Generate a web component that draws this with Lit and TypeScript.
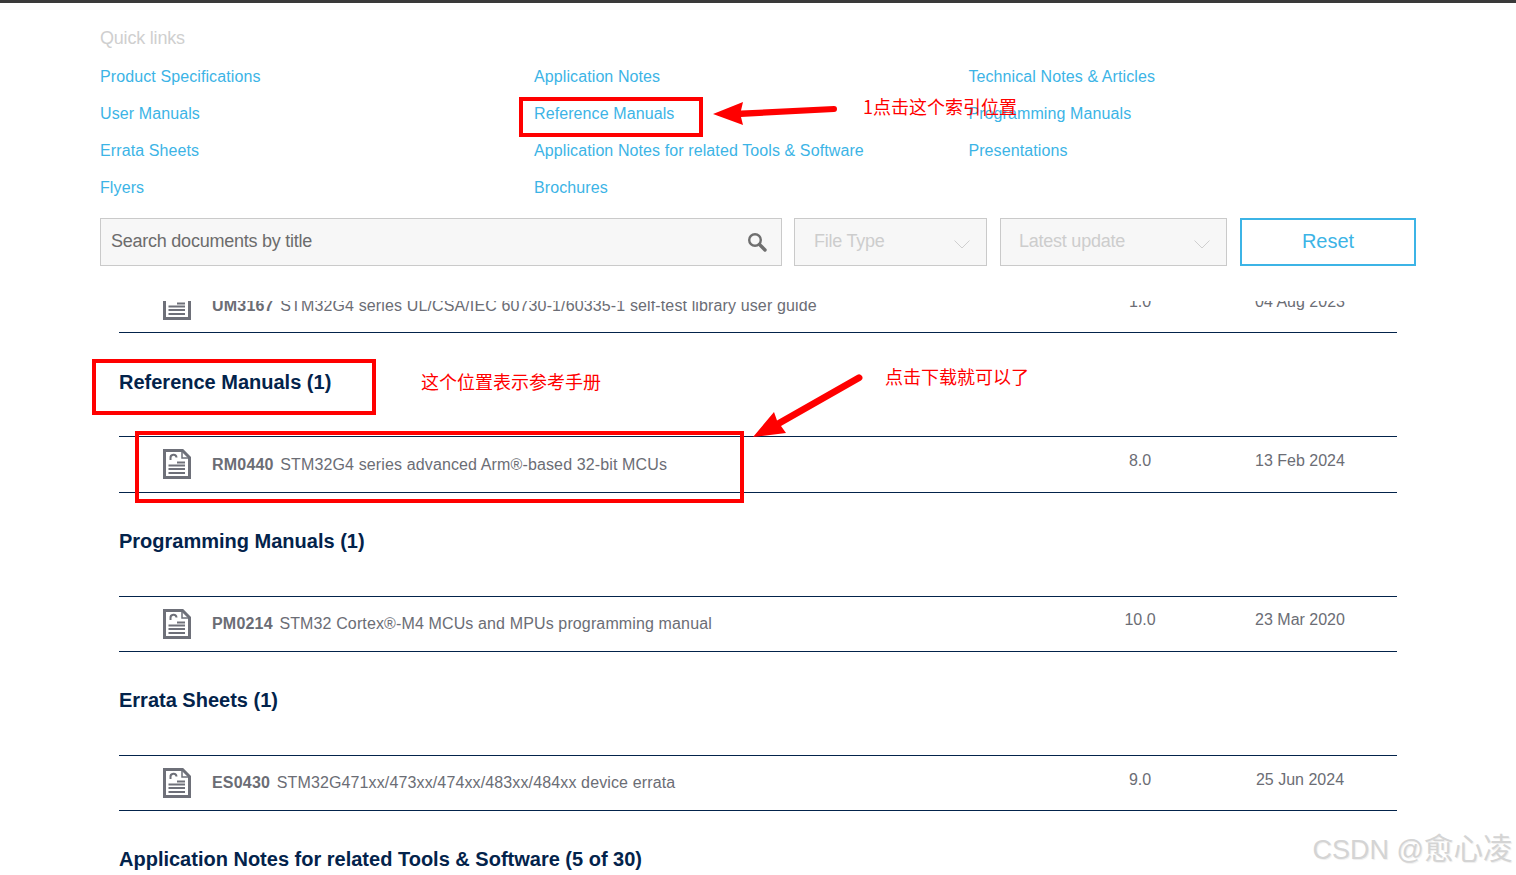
import { LitElement, html, css, svg } from "lit";
import { customElement } from "lit/decorators.js";

const docIcon = svg`<svg class="doc" width="28" height="30" viewBox="0 0 28 30" fill="none" stroke="#6e7079">
  <path d="M1.5 1.5H19.5L26.5 8.5V28.5H1.5Z" stroke-width="3" stroke-linejoin="miter"/>
  <path d="M19 2V9H26" stroke-width="1.5"/>
  <path d="M7.5 11V9A3 3 0 0 1 13.5 8.5" stroke-width="2"/>
  <path d="M14 13.5H22M5.5 16.5H22M5.5 20H22M5.5 24H22" stroke-width="2"/>
</svg>`;

const sections = [
  { title: "Reference Manuals (1)", code: "RM0440", name: "STM32G4 series advanced Arm®-based 32-bit MCUs", ver: "8.0", date: "13 Feb 2024" },
  { title: "Programming Manuals (1)", code: "PM0214", name: "STM32 Cortex®-M4 MCUs and MPUs programming manual", ver: "10.0", date: "23 Mar 2020" },
  { title: "Errata Sheets (1)", code: "ES0430", name: "STM32G471xx/473xx/474xx/483xx/484xx device errata", ver: "9.0", date: "25 Jun 2024" },
];

const links = [
  "Product Specifications", "Application Notes", "Technical Notes & Articles",
  "User Manuals", "Reference Manuals", "Programming Manuals",
  "Errata Sheets", "Application Notes for related Tools & Software", "Presentations",
  "Flyers", "Brochures",
];

const chevron = svg`<svg width="16" height="9" viewBox="0 0 16 9" fill="none" stroke="#cfcfcf" stroke-width="1"><path d="M.5 .5L8 8L15.5 .5"/></svg>`;

@customElement("app-root")
export class AppRoot extends LitElement {
  static styles = css`
    :host {
      display: block;
      position: relative;
      width: 1516px;
      height: 875px;
      overflow: hidden;
      background: #fff;
      font-family: "Liberation Sans", Arial, sans-serif;
    }
    .topbar { height: 3px; background: #3a3a3a; }
    .filters { padding: 0 100px; }
    .quick { height: 47px; padding-top: 24px; box-sizing: border-box; font-size: 18px; line-height: 22px; color: #cfcfcf; letter-spacing: -0.2px; }
    .links { display: grid; grid-template-columns: 434px 434.4px 1fr; grid-auto-rows: 37px; height: 148px; margin-top: 8px; }
    .links a { font-size: 16px; line-height: 37px; color: #3cb4e6; text-decoration: none; letter-spacing: 0.1px; }
    .controls { display: flex; height: 48px; margin-top: 12px; }
    .field { box-sizing: border-box; height: 48px; background: #f7f7f7; border: 1px solid #cacaca; display: flex; align-items: center; justify-content: space-between; font-size: 18px; letter-spacing: -0.24px; }
    .field span { margin-bottom: 2px; }
    .search { width: 682px; padding: 0 14px 0 10px; color: #6c6c6c; }
    .select { color: #cdcdcd; padding: 0 16px 0 19px; }
    .select svg { margin-top: 5px; }
    .s1 { width: 193px; margin-left: 12px; }
    .s2 { width: 227px; margin-left: 13px; padding-left: 18px; }
    .reset { box-sizing: border-box; width: 176px; height: 48px; margin-left: 13px; padding-bottom: 2px; border: 2px solid #3cb4e6; color: #3cb4e6; font-size: 20px; display: flex; align-items: center; justify-content: center; }
    .list { height: 574px; margin-top: 35px; overflow: hidden; padding: 0 119px; }
    .inner { margin-top: -24.1px; }
    .row { box-sizing: border-box; height: 56.5px; border-top: 1px solid transparent; border-bottom: 1px solid #03234b; display: flex; color: #6b6d75; font-size: 16px; }
    .row.top { border-top-color: #03234b; }
    .doc { flex: none; margin: 12px 21px 0 44px; }
    .label { margin-top: 17.6px; line-height: 20px; white-space: nowrap; flex: 1; letter-spacing: 0.13px; }
    .label b { margin-right: 2px; letter-spacing: 0.2px; }
    .ver { width: 100px; margin-top: 13.8px; line-height: 20px; text-align: center; }
    .date { width: 150px; margin: 13.8px 22px 0 35px; line-height: 20px; text-align: center; }
    h2 { margin: 0; box-sizing: border-box; height: 102.8px; padding-top: 36.2px; font-size: 20px; line-height: 24px; font-weight: 700; color: #03234b; white-space: nowrap; }
    .overlay { position: absolute; inset: 0; pointer-events: none; }
    .box { position: absolute; box-sizing: border-box; border: 4px solid #f00; }
    .note { position: absolute; color: #f00; font-family: "Noto Sans CJK SC", sans-serif; font-size: 18px; line-height: 24px; white-space: nowrap; }
    .mark { position: absolute; left: 1312.5px; top: 829px; font-size: 27px; line-height: 40px; color: #d4d4d4; white-space: nowrap; font-family: "Liberation Sans", "Noto Sans CJK SC", sans-serif; text-shadow: 1px 1px 1px #eee; }
    .mark span { font-size: 29.5px; }
    .arrows { position: absolute; left: 0; top: 0; }
  `;

  private rowTpl(r: { code: string; name: string; ver: string; date: string }, top: boolean) {
    return html`<div class="row ${top ? "top" : ""}">
      ${docIcon}
      <div class="label"><b>${r.code}</b> ${r.name}</div>
      <div class="ver">${r.ver}</div>
      <div class="date">${r.date}</div>
    </div>`;
  }

  render() {
    return html`
      <div class="topbar"></div>
      <div class="filters">
        <div class="quick">Quick links</div>
        <div class="links">${links.map((l) => html`<a href="#">${l}</a>`)}</div>
        <div class="controls">
          <div class="field search">
            <span>Search documents by title</span>
            <svg width="20" height="20" viewBox="0 0 20 20" fill="none">
              <circle cx="8" cy="8" r="5.8" stroke="#6f6f6f" stroke-width="2.4"/>
              <path d="M12.5 12.5L18 18" stroke="#6f6f6f" stroke-width="3.4" stroke-linecap="round"/>
            </svg>
          </div>
          <div class="field select s1"><span>File Type</span>${chevron}</div>
          <div class="field select s2"><span>Latest update</span>${chevron}</div>
          <div class="reset">Reset</div>
        </div>
      </div>
      <div class="list">
        <div class="inner">
          ${this.rowTpl({ code: "UM3167", name: "STM32G4 series UL/CSA/IEC 60730-1/60335-1 self-test library user guide", ver: "1.0", date: "04 Aug 2023" }, false)}
          ${sections.map((s) => html`<h2>${s.title}</h2>${this.rowTpl(s, true)}`)}
          <h2>Application Notes for related Tools &amp; Software (5 of 30)</h2>
        </div>
      </div>
      <div class="overlay">
        <div class="box" style="left:519px;top:97px;width:184px;height:40px"></div>
        <div class="box" style="left:92px;top:359px;width:284px;height:56px"></div>
        <div class="box" style="left:135px;top:431px;width:609px;height:72px"></div>
        <svg class="arrows" width="1516" height="875">
          <path d="M713 114L743 102L741 110.5L834 106A3 3 0 0 1 834 112L741 117L743 125Z" fill="#f00"/>
          <path d="M753 437L774 412L777 420.5L857 375A3.2 3.2 0 0 1 861 380.5L781 426L786 433Z" fill="#f00"/>
        </svg>
        <div class="note" style="left:863px;top:94px">1点击这个索引位置</div>
        <div class="note" style="left:421px;top:369px">这个位置表示参考手册</div>
        <div class="note" style="left:885px;top:364px">点击下载就可以了</div>
        <div class="mark">CSDN @<span>愈心凌</span></div>
      </div>
    `;
  }
}
